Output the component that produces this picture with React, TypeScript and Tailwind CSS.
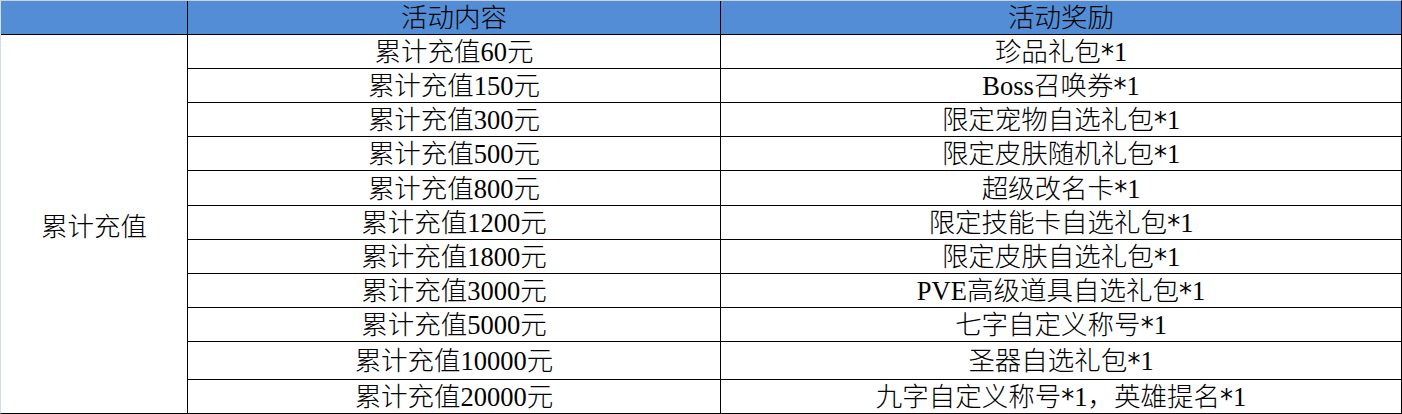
const rows = [
  { amount: "累计充值60元", reward: "珍品礼包*1", h: "h-[34px]" },
  { amount: "累计充值150元", reward: "Boss召唤券*1", h: "h-[34px]" },
  { amount: "累计充值300元", reward: "限定宠物自选礼包*1", h: "h-[34px]" },
  { amount: "累计充值500元", reward: "限定皮肤随机礼包*1", h: "h-[34px]" },
  { amount: "累计充值800元", reward: "超级改名卡*1", h: "h-[35px]" },
  { amount: "累计充值1200元", reward: "限定技能卡自选礼包*1", h: "h-[34px]" },
  { amount: "累计充值1800元", reward: "限定皮肤自选礼包*1", h: "h-[34px]" },
  { amount: "累计充值3000元", reward: "PVE高级道具自选礼包*1", h: "h-[34px]" },
  { amount: "累计充值5000元", reward: "七字自定义称号*1", h: "h-[34px]" },
  { amount: "累计充值10000元", reward: "圣器自选礼包*1", h: "h-[38px]" },
  { amount: "累计充值20000元", reward: "九字自定义称号*1，英雄提名*1", h: "h-[33px]" },
];

// 参考图里的星号更大、居中，单独换个字体并往下挪一点
function Reward({ text }: { text: string }) {
  const parts = text.split("*");
  return (
    <>
      {parts.map((p, i) => (
        <span key={i}>
          {i > 0 && (
            <span className="inline-block translate-y-[2px] font-normal font-['DejaVu_Sans',sans-serif] text-[26px]">
              *
            </span>
          )}
          {p}
        </span>
      ))}
    </>
  );
}

export default function App() {
  return (
    <div className="w-[1402px] h-[414px] bg-white text-black text-[26.5px] leading-none font-light font-['Liberation_Serif','Noto_Sans_CJK_SC',serif] border-t border-l border-r border-b border-t-[#cbd2de] border-l-[#d4dcea] border-r-black border-b-black flex flex-col overflow-hidden">
      {/* 表头 */}
      <div className="flex h-[34px] shrink-0 bg-[#538DD5] border-b border-black">
        <div className="w-[186px] shrink-0" />
        <div className="w-[533px] shrink-0 border-l border-black flex items-center justify-center pt-[1px]">
          活动内容
        </div>
        <div className="flex-1 border-l border-black flex items-center justify-center pt-[1px]">
          活动奖励
        </div>
      </div>

      {/* 内容 */}
      <div className="flex flex-1">
        <div className="w-[186px] shrink-0 flex items-center justify-center pt-[6px]">
          累计充值
        </div>
        <div className="flex-1 border-l border-black flex flex-col">
          {rows.map((r, i) => (
            <div
              key={r.amount}
              className={`flex shrink-0 ${r.h} ${i < rows.length - 1 ? "border-b border-black" : ""}`}
            >
              <div className="w-[532px] shrink-0 flex items-center justify-center pt-[2px]">
                {r.amount}
              </div>
              <div className="flex-1 border-l border-black flex items-center justify-center pt-[2px]">
                <Reward text={r.reward} />
              </div>
            </div>
          ))}
        </div>
      </div>
    </div>
  );
}
